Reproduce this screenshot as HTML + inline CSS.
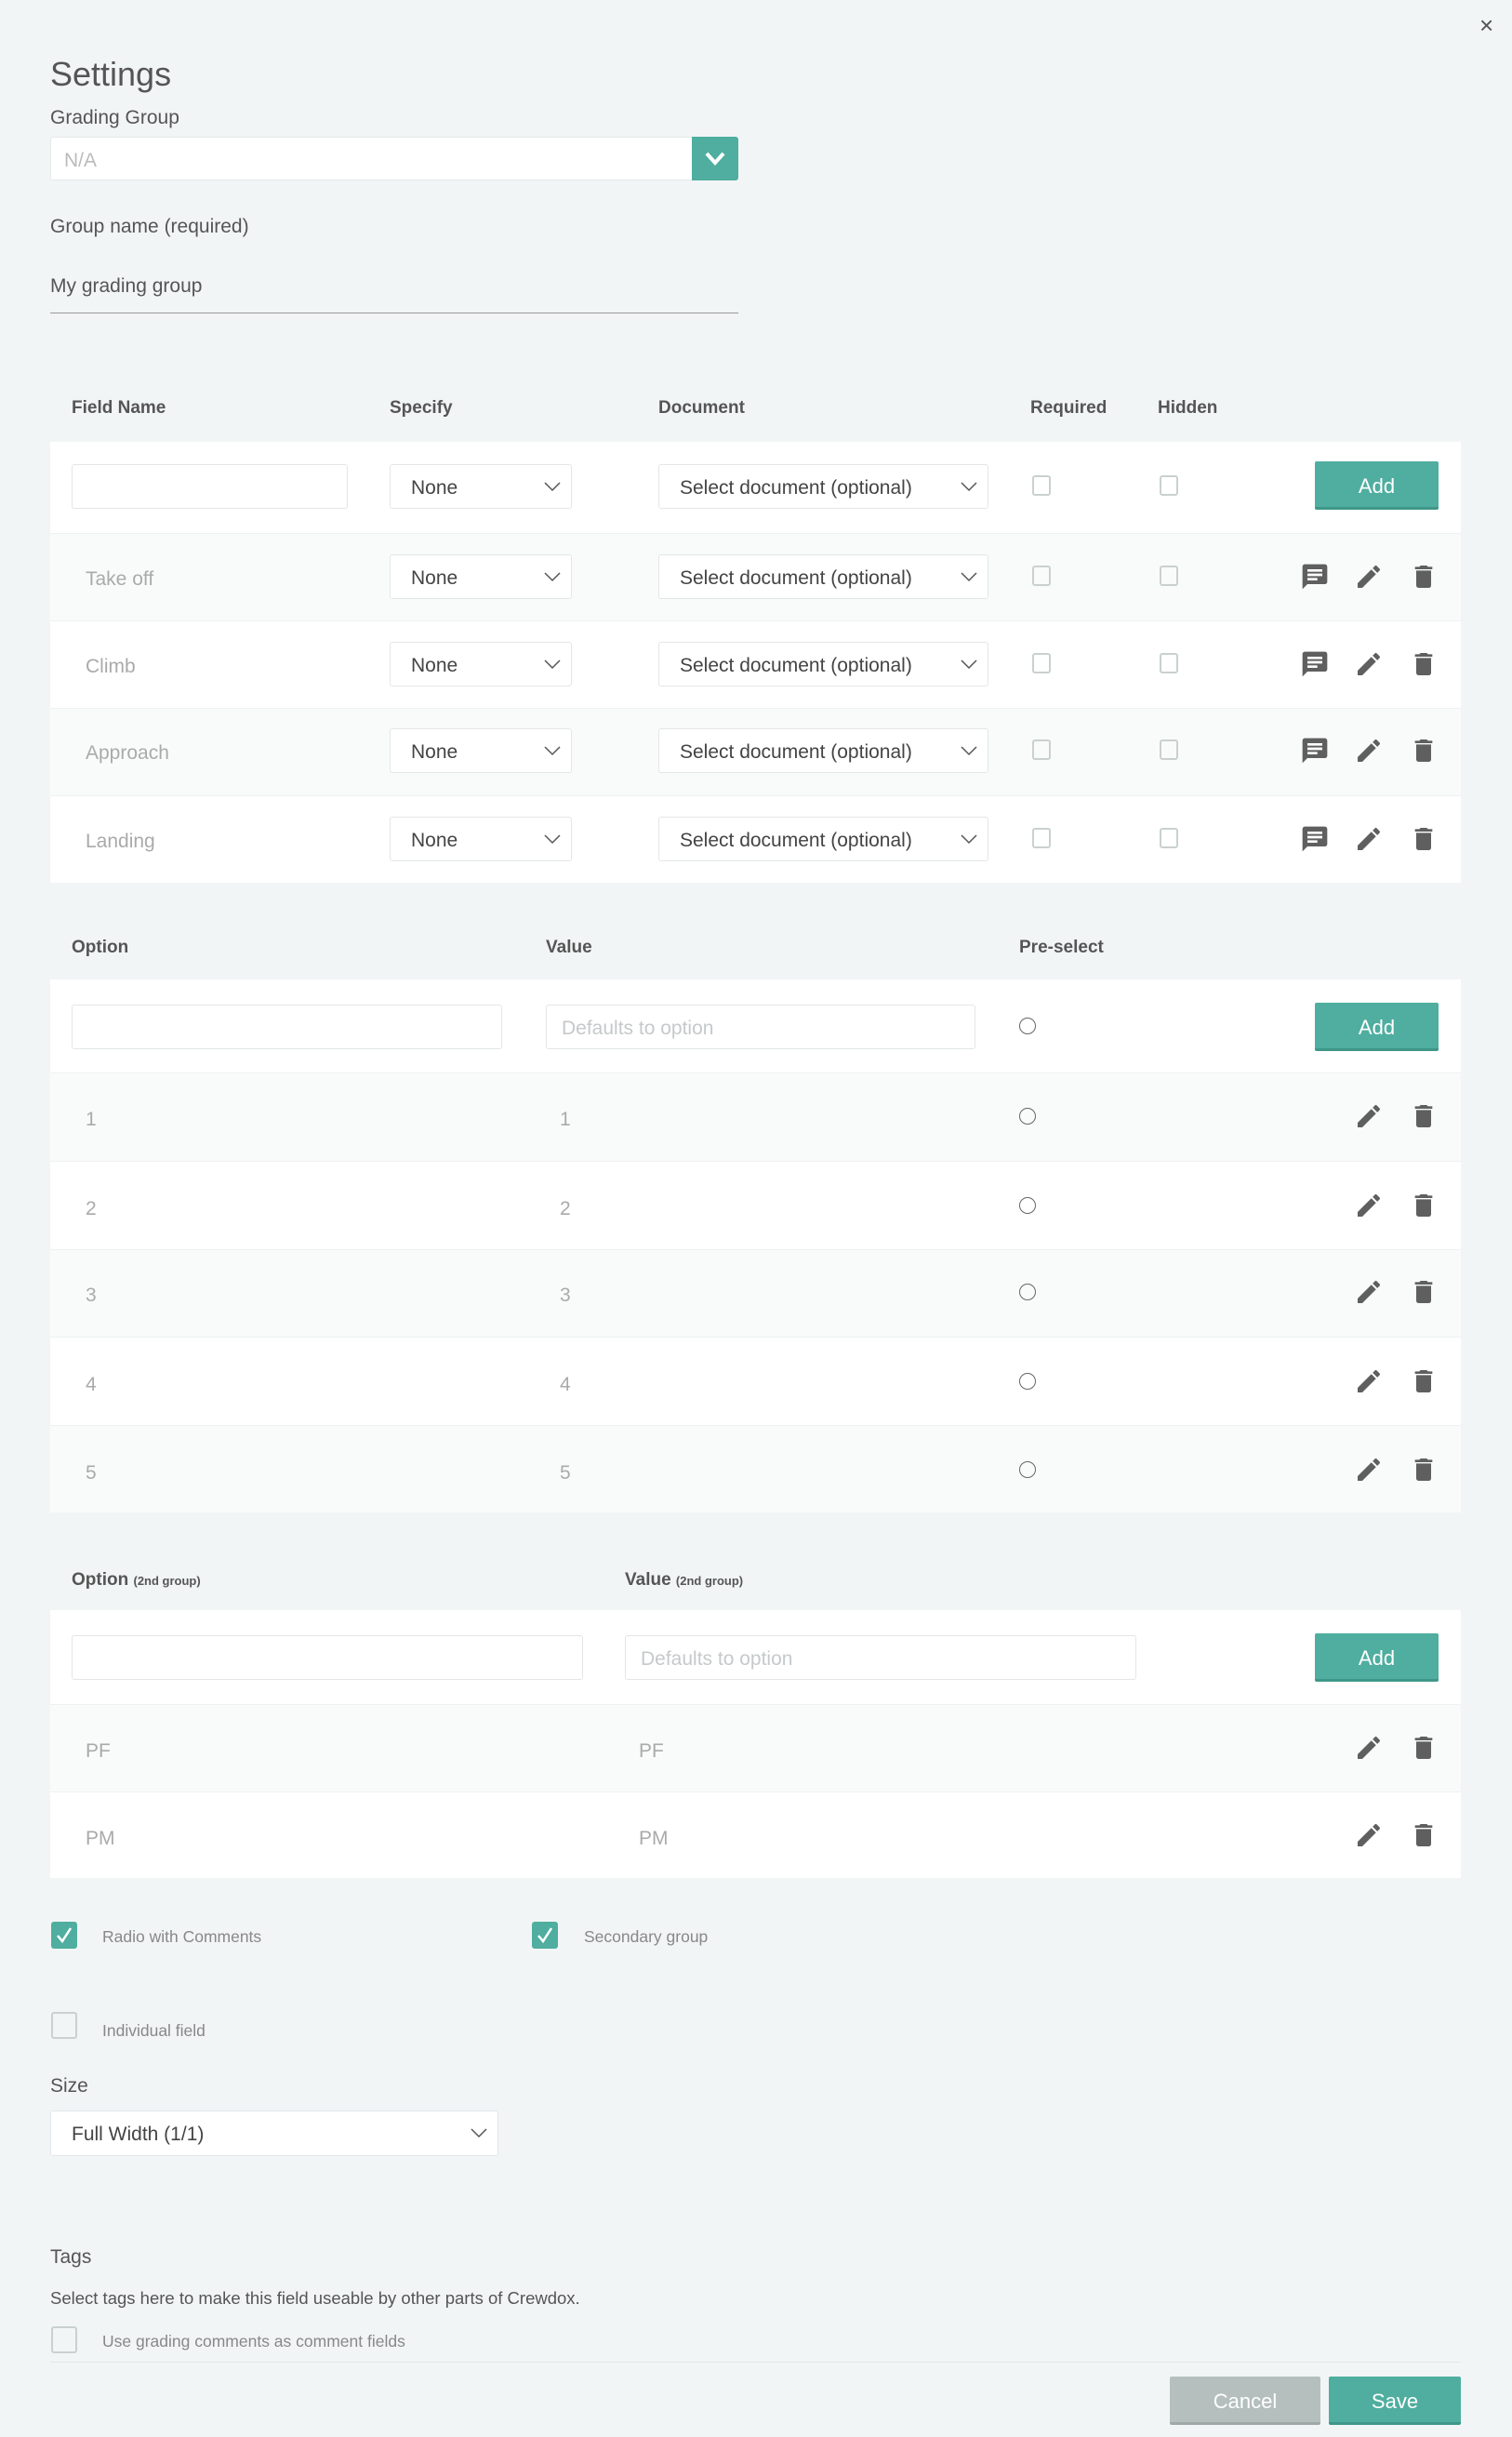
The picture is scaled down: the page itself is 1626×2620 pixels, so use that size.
<!DOCTYPE html>
<html><head><meta charset="utf-8"><style>
*{box-sizing:border-box;margin:0;padding:0}
body{width:1626px;height:2620px;background:#f2f5f6;font-family:"Liberation Sans",sans-serif;color:#555;position:relative;overflow:hidden}
.a{position:absolute}
.lbl{font-size:21px;color:#555}
.th{font-size:19px;font-weight:bold;color:#555}
.panel{position:absolute;left:54px;width:1517px;background:#fff}
.row{position:absolute;left:0;width:1517px;border-top:1px solid #eef1f2}
.row.g{background:#f9fbfb}
.inp{position:absolute;background:#fff;border:1px solid #e3e6e8;border-radius:3px;height:48px;font-size:21px;color:#c6c9cb;padding-left:16px;line-height:50px}
.sel{position:absolute;background:#fff;border:1px solid #e3e6e8;border-radius:3px;height:48px;font-size:21px;color:#444;padding-left:22px;line-height:50px}
.sel svg{position:absolute;right:10px;top:17px}
.cb{position:absolute;width:20px;height:22px;border:2px solid #c9d1d0;border-radius:3px}
.rd{position:absolute;width:18px;height:18px;border:1.5px solid #666;border-radius:50%}
.btn{position:absolute;background:#4fae9f;color:#fff;font-size:22px;text-align:center;border-bottom:3px solid #3e9789;border-radius:2px}
.cell{position:absolute;font-size:21px;color:#aaa}
.ic{position:absolute}
.sm{font-size:17.5px;color:#888}
</style></head><body>
<div class="a" style="left:1591px;top:12px;font-size:26px;color:#555">×</div>
<div class="a" style="left:54px;top:59px;font-size:36px;color:#555">Settings</div>
<div class="a lbl" style="left:54px;top:115px">Grading Group</div>
<div class="a" style="left:54px;top:147px;width:740px;height:47px;background:#fff;border:1px solid #e6e9ea;border-radius:3px"></div>
<div class="a" style="left:69px;top:161px;font-size:21px;color:#bbb">N/A</div>
<div class="a" style="left:744px;top:147px;width:50px;height:47px;background:#4fae9f;border-radius:0 3px 3px 0"><svg width="50" height="47"><path d="M16 18l9 10 9-10" stroke="#fff" stroke-width="4" fill="none"/></svg></div>
<div class="a lbl" style="left:54px;top:232px">Group name (required)</div>
<div class="a lbl" style="left:54px;top:296px">My grading group</div>
<div class="a" style="left:54px;top:336px;width:740px;height:1px;background:#999"></div>

<div class="a th" style="left:77px;top:428px">Field Name</div>
<div class="a th" style="left:419px;top:428px">Specify</div>
<div class="a th" style="left:708px;top:428px">Document</div>
<div class="a th" style="left:1108px;top:428px">Required</div>
<div class="a th" style="left:1245px;top:428px">Hidden</div>

<div class="panel" style="top:475px;height:474px">
 <div class="row" style="top:0;height:98px;border:none"></div>
 <div class="row g" style="top:98px;height:94px"></div>
 <div class="row" style="top:192px;height:94px"></div>
 <div class="row g" style="top:286px;height:94px"></div>
 <div class="row" style="top:380px;height:94px"></div>
</div>
<div class="inp" style="left:77px;top:499px;width:297px"></div>
<div class="btn" style="left:1414px;top:496px;width:133px;height:52px;line-height:54px">Add</div>

<div class="panel" style="top:1053px;height:573px">
 <div class="row" style="top:0;height:100px;border:none"></div>
 <div class="row g" style="top:100px;height:95px"></div>
 <div class="row" style="top:195px;height:95px"></div>
 <div class="row g" style="top:290px;height:94px"></div>
 <div class="row" style="top:384px;height:95px"></div>
 <div class="row g" style="top:479px;height:94px"></div>
</div>
<div class="a th" style="left:77px;top:1008px">Option</div>
<div class="a th" style="left:587px;top:1008px">Value</div>
<div class="a th" style="left:1096px;top:1008px">Pre-select</div>
<div class="inp" style="left:77px;top:1080px;width:463px"></div>
<div class="inp" style="left:587px;top:1080px;width:462px">Defaults to option</div>
<div class="btn" style="left:1414px;top:1078px;width:133px;height:52px;line-height:54px">Add</div>

<div class="a th" style="left:77px;top:1688px">Option <span style="font-size:13px">(2nd group)</span></div>
<div class="a th" style="left:672px;top:1688px">Value <span style="font-size:13px">(2nd group)</span></div>
<div class="panel" style="top:1731px;height:288px">
 <div class="row" style="top:0;height:101px;border:none"></div>
 <div class="row g" style="top:101px;height:94px"></div>
 <div class="row" style="top:195px;height:93px"></div>
</div>
<div class="inp" style="left:77px;top:1758px;width:550px"></div>
<div class="inp" style="left:672px;top:1758px;width:550px">Defaults to option</div>
<div class="btn" style="left:1414px;top:1756px;width:133px;height:52px;line-height:54px">Add</div>
<div class="cell" style="left:92px;top:1871px">PF</div>
<div class="cell" style="left:687px;top:1871px">PF</div>
<div class="cell" style="left:92px;top:1965px">PM</div>
<div class="cell" style="left:687px;top:1965px">PM</div>

<div id="dyn"></div>

<div class="a" style="left:55px;top:2066px;width:28px;height:29px;background:#4fae9f;border-radius:3px"><svg width="28" height="29"><path d="M7 15l5 6 9-14" stroke="#fff" stroke-width="2.5" fill="none"/></svg></div>
<div class="a sm" style="left:110px;top:2072px">Radio with Comments</div>
<div class="a" style="left:572px;top:2066px;width:28px;height:29px;background:#4fae9f;border-radius:3px"><svg width="28" height="29"><path d="M7 15l5 6 9-14" stroke="#fff" stroke-width="2.5" fill="none"/></svg></div>
<div class="a sm" style="left:628px;top:2072px">Secondary group</div>
<div class="cb" style="left:55px;top:2163px;width:28px;height:29px"></div>
<div class="a sm" style="left:110px;top:2173px">Individual field</div>
<div class="a lbl" style="left:54px;top:2231px">Size</div>
<div class="sel" style="left:54px;top:2269px;width:482px;height:49px">Full Width (1/1)<svg width="20" height="12"><path d="M2 2l8 8 8-8" stroke="#555" stroke-width="1.5" fill="none"/></svg></div>
<div class="a lbl" style="left:54px;top:2415px">Tags</div>
<div class="a" style="left:54px;top:2460px;font-size:18.5px;color:#555">Select tags here to make this field useable by other parts of Crewdox.</div>
<div class="cb" style="left:55px;top:2501px;width:28px;height:29px"></div>
<div class="a sm" style="left:110px;top:2507px">Use grading comments as comment fields</div>
<div class="a" style="left:54px;top:2539px;width:1517px;height:1px;background:#e3e7e8"></div>
<div class="btn" style="left:1258px;top:2555px;width:162px;height:52px;line-height:54px;background:#b4bfbe;border-bottom-color:#9ea9a8">Cancel</div>
<div class="btn" style="left:1429px;top:2555px;width:142px;height:52px;line-height:54px">Save</div>

<script>
var C='<svg class="ic" width="32" height="32" viewBox="0 0 24 24" style="left:LEFTpx;top:TOPpx"><path d="M20 2H4c-1.1 0-2 .9-2 2v18l4-4h14c1.1 0 2-.9 2-2V4c0-1.1-.9-2-2-2z" fill="#5f5f5f"/><path d="M6 6h12v2H6zM6 9.5h12v2H6zM6 13h8v2H6z" fill="#fff"/></svg>';
var P='<svg class="ic" width="32" height="32" viewBox="0 0 24 24" style="left:LEFTpx;top:TOPpx"><path d="M3 17.25V21h3.75L17.81 9.94l-3.75-3.75L3 17.25zM20.71 7.04a1 1 0 000-1.41l-2.34-2.34a1 1 0 00-1.41 0l-1.830 1.83 3.75 3.75 1.83-1.83z" fill="#5f5f5f"/></svg>';
var T='<svg class="ic" width="32" height="32" viewBox="0 0 24 24" style="left:LEFTpx;top:TOPpx"><path d="M6 19c0 1.1.9 2 2 2h8c1.1 0 2-.9 2-2V7H6v12zM19 4h-3.5l-1-1h-5l-1 1H5v2h14V4z" fill="#5f5f5f"/></svg>';
function ic(s,l,t){return s.replace('LEFT',l).replace('TOP',t);}
var chev='<svg width="20" height="12"><path d="M2 2l8 8 8-8" stroke="#555" stroke-width="1.5" fill="none"/></svg>';
var h='';
var rows=[[null,523],['Take off',620],['Climb',714],['Approach',807],['Landing',902]];
rows.forEach(function(r){var y=r[1];
 if(r[0])h+='<div class="cell" style="left:92px;top:'+(y-9)+'px">'+r[0]+'</div>';
 h+='<div class="sel" style="left:419px;top:'+(y-24)+'px;width:196px">None'+chev+'</div>';
 h+='<div class="sel" style="left:708px;top:'+(y-24)+'px;width:355px">Select document (optional)'+chev+'</div>';
 h+='<div class="cb" style="left:1110px;top:'+(y-12)+'px"></div>';
 h+='<div class="cb" style="left:1247px;top:'+(y-12)+'px"></div>';
 if(r[0]){h+=ic(C,1398,y-16)+ic(P,1456,y-16)+ic(T,1515,y-16);}
});
[1201,1297,1390,1486,1581].forEach(function(y,i){
 h+='<div class="cell" style="left:92px;top:'+(y-9)+'px">'+(i+1)+'</div>';
 h+='<div class="cell" style="left:602px;top:'+(y-9)+'px">'+(i+1)+'</div>';
 h+='<div class="rd" style="left:1096px;top:'+(y-10)+'px"></div>';
 h+=ic(P,1456,y-17)+ic(T,1515,y-17);
});
h+='<div class="rd" style="left:1096px;top:1094px"></div>';
[1880,1974].forEach(function(y){h+=ic(P,1456,y-17)+ic(T,1515,y-17);});
document.getElementById('dyn').innerHTML=h;
</script>
</body></html>
